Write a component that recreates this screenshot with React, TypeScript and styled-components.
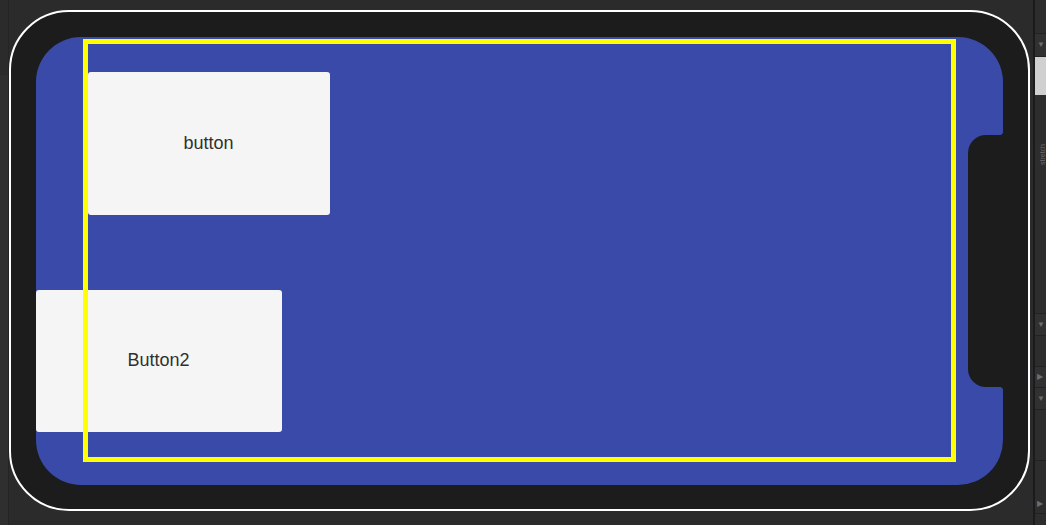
import React from 'react'
import styled, { createGlobalStyle } from 'styled-components'

const GlobalStyle = createGlobalStyle`
  html, body {
    margin: 0;
    padding: 0;
    background: #2b2b2b;
    font-family: "Liberation Sans", Arial, sans-serif;
  }
  #root {
    width: 1046px;
    height: 525px;
    overflow: hidden;
  }
`

const bezel = '#1c1c1c'

const Editor = styled.div`
  display: flex;
  width: 1046px;
  height: 525px;
  background: #2b2b2b;
`

const LeftStrip = styled.div`
  width: 8px;
  border-right: 1px solid #242424;
  background: linear-gradient(#2b2b2b 0 75px, #2f2f2f 75px);
`

const Viewport = styled.div`
  flex: 1;
  padding: 10px 3px 14px 0;
  box-sizing: border-box;
`

const Device = styled.div`
  box-sizing: border-box;
  width: 1021px;
  height: 501px;
  border: 2.5px solid #ffffff;
  border-radius: 60px;
  background: ${bezel};
  padding: 24.5px 24.5px 23.5px 24.5px;
`

const Screen = styled.div`
  position: relative;
  width: 967px;
  height: 448px;
  border-radius: 45px;
  background: #3a4aa9;
  display: flex;
  flex-direction: column;
  align-items: flex-start;
  padding-top: 35px;
  box-sizing: border-box;
`

const UiButton = styled.div<{ $left: number; $top: number; $w: number; $h: number }>`
  margin-left: ${(p) => p.$left}px;
  margin-top: ${(p) => p.$top}px;
  width: ${(p) => p.$w}px;
  height: ${(p) => p.$h}px;
  background: #f5f5f5;
  border-radius: 3px;
  display: flex;
  align-items: center;
  justify-content: center;
  color: #303030;
  font-size: 18px;
`

const Notch = styled.div`
  position: absolute;
  top: 98px;
  right: 0;
  width: 35px;
  height: 252px;
  background: ${bezel};
  border-radius: 18px 0 0 18px;

  &::before,
  &::after {
    content: '';
    position: absolute;
    right: 0;
    width: 4px;
    height: 4px;
  }
  &::before {
    top: -4px;
    background: radial-gradient(circle at 0 0, transparent 4px, ${bezel} 4.5px);
  }
  &::after {
    bottom: -4px;
    background: radial-gradient(circle at 0 100%, transparent 4px, ${bezel} 4.5px);
  }
`

const SafeArea = styled.div`
  position: absolute;
  left: 47px;
  top: 2px;
  width: 873px;
  height: 423px;
  box-sizing: border-box;
  border: 5px solid #ffff00;
  pointer-events: none;
`

const Inspector = styled.div`
  width: 11px;
  border-left: 2px solid #1b1b1b;
  background: #2d2d2d;
  display: flex;
  flex-direction: column;
  overflow: hidden;
`

const Space = styled.div<{ $h: number }>`
  height: ${(p) => p.$h}px;
  border-bottom: 1px solid #222;
  position: relative;
  flex-shrink: 0;
`

const Fold = styled.div<{ $h: number }>`
  height: ${(p) => p.$h}px;
  border-bottom: 1px solid #222;
  background: #313131;
  color: #6c6c6c;
  font-size: 8px;
  line-height: ${(p) => p.$h}px;
  padding-left: 2px;
  flex-shrink: 0;
`

const Thumb = styled.div`
  height: 38px;
  background: #d0d0d0;
  flex-shrink: 0;
`

const SideLabel = styled.span`
  position: absolute;
  left: 4px;
  top: 70px;
  transform: rotate(-90deg);
  transform-origin: left top;
  color: #6e6e6e;
  font-size: 7px;
  white-space: nowrap;
`

const Arrow = styled.span`
  position: absolute;
  left: 2px;
  top: 38px;
  color: #6c6c6c;
  font-size: 8px;
`

export default function App() {
  return (
    <>
      <GlobalStyle />
      <Editor>
        <LeftStrip />
        <Viewport>
          <Device>
            <Screen>
              <UiButton $left={52} $top={0} $w={242} $h={143}>button</UiButton>
              <UiButton $left={0} $top={75} $w={246} $h={142}>Button2</UiButton>
              <Notch />
              <SafeArea />
            </Screen>
          </Device>
        </Viewport>
        <Inspector>
          <Space $h={33} />
          <Fold $h={22}>▼</Fold>
          <Thumb />
          <Space $h={218}>
            <SideLabel>stretch</SideLabel>
          </Space>
          <Fold $h={21}>▼</Fold>
          <Space $h={30} />
          <Fold $h={20}>▶</Fold>
          <Fold $h={21}>▼</Fold>
          <Space $h={50} />
          <Space $h={52}>
            <Arrow>▶</Arrow>
          </Space>
        </Inspector>
      </Editor>
    </>
  )
}
